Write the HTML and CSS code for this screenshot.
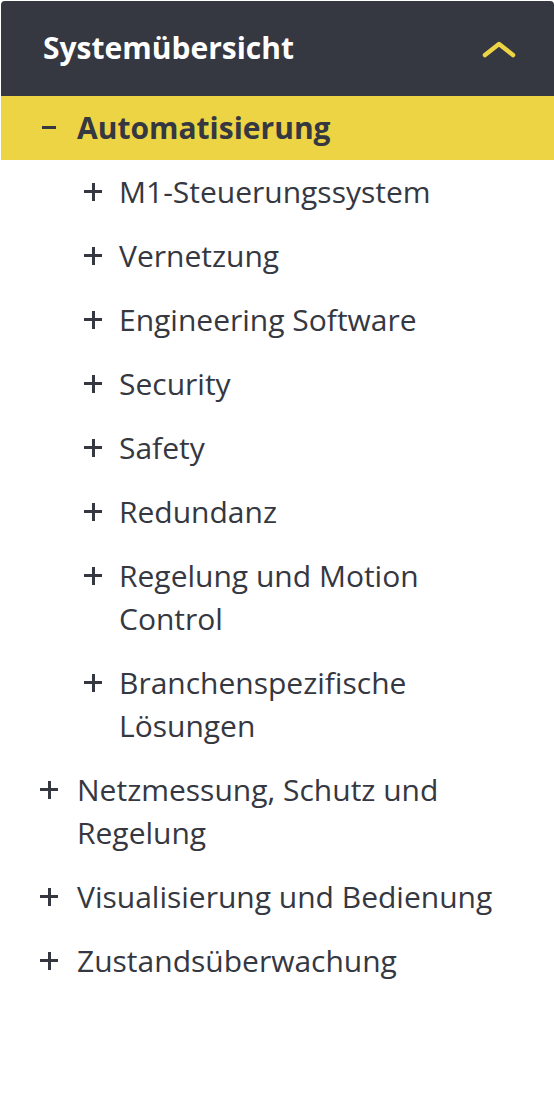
FILE: index.html
```html
<!DOCTYPE html>
<html lang="de">

<head>
    <meta charset="UTF-8">
    <meta name="viewport" content="width=device-width, initial-scale=1.0">
    <title>Systemübersicht</title>
    <link rel="stylesheet" href="styles.css">
</head>

<body>
    <nav class="sidenav">
        <div class="sidenav-head">
            <span class="sidenav-title">Systemübersicht</span>
            <svg class="chevron" width="36" height="22" viewBox="0 0 36 22">
                <polyline points="5,17 19,6 33,17" fill="none" stroke="#ecd444" stroke-width="4.5" stroke-linecap="round" stroke-linejoin="round"/>
            </svg>
        </div>

        <ul class="tree">
            <li class="tree-item open">
                <a class="tree-link active" href="#"><span class="toggle minus"></span>Automatisierung</a>
                <ul class="subtree">
                    <li><a class="tree-link" href="#"><span class="toggle plus"></span><span>M1-Steuerungssystem</span></a></li>
                    <li><a class="tree-link" href="#"><span class="toggle plus"></span><span>Vernetzung</span></a></li>
                    <li><a class="tree-link" href="#"><span class="toggle plus"></span><span>Engineering Software</span></a></li>
                    <li><a class="tree-link" href="#"><span class="toggle plus"></span><span>Security</span></a></li>
                    <li><a class="tree-link" href="#"><span class="toggle plus"></span><span>Safety</span></a></li>
                    <li><a class="tree-link" href="#"><span class="toggle plus"></span><span>Redundanz</span></a></li>
                    <li><a class="tree-link" href="#"><span class="toggle plus"></span><span>Regelung und Motion Control</span></a></li>
                    <li><a class="tree-link" href="#"><span class="toggle plus"></span><span>Branchenspezifische Lösungen</span></a></li>
                </ul>
            </li>
            <li class="tree-item"><a class="tree-link" href="#"><span class="toggle plus"></span><span>Netzmessung, Schutz und Regelung</span></a></li>
            <li class="tree-item"><a class="tree-link" href="#"><span class="toggle plus"></span><span>Visualisierung und Bedienung</span></a></li>
            <li class="tree-item"><a class="tree-link" href="#"><span class="toggle plus"></span><span>Zustandsüberwachung</span></a></li>
        </ul>
    </nav>
</body>

</html>
```

FILE: styles.css
```css
body {
    margin: 0;
    padding: 0;
    background-color: #fff;
    color: #353741;
    font-family: "Open Sans", "Noto Sans", sans-serif;
}

.sidenav {
    margin: 1px 0 0 1px;
}

.sidenav-head {
    display: flex;
    justify-content: space-between;
    align-items: center;
    height: 95px;
    padding: 0 38px 0 42px;
    background-color: #353741;
    border-radius: 4px 4px 0 0;
}

.sidenav-title {
    color: #fff;
    font-size: 30px;
    font-weight: 700;
    padding-bottom: 2px;
}

.chevron {
    margin-top: 0;
}

.tree,
.subtree {
    list-style: none;
    margin: 0;
    padding: 0;
}

.tree {
    padding-bottom: 40px;
}

.tree-link {
    display: flex;
    align-items: flex-start;
    padding: 10px 40px 11px 37px;
    color: #353741;
    text-decoration: none;
    font-size: 30px;
    line-height: 43px;
}

.tree-link.active {
    background-color: #ecd444;
    font-weight: 700;
}

.subtree .tree-link {
    padding-left: 81px;
}

/* +/- toggle drawn with pseudo elements */
.toggle {
    position: relative;
    flex: none;
    width: 21px;
    height: 43px;
    margin-right: 18px;
}

.subtree .toggle {
    margin-right: 16px;
}

.toggle::before,
.toggle::after {
    content: "";
    position: absolute;
    background-color: #353741;
}

.toggle::before {
    left: 2px;
    top: 20px;
    width: 18px;
    height: 3px;
}

.plus::after {
    left: 9.5px;
    top: 12.5px;
    width: 3px;
    height: 18px;
}

.minus::before {
    left: 4px;
    width: 14px;
}
```
